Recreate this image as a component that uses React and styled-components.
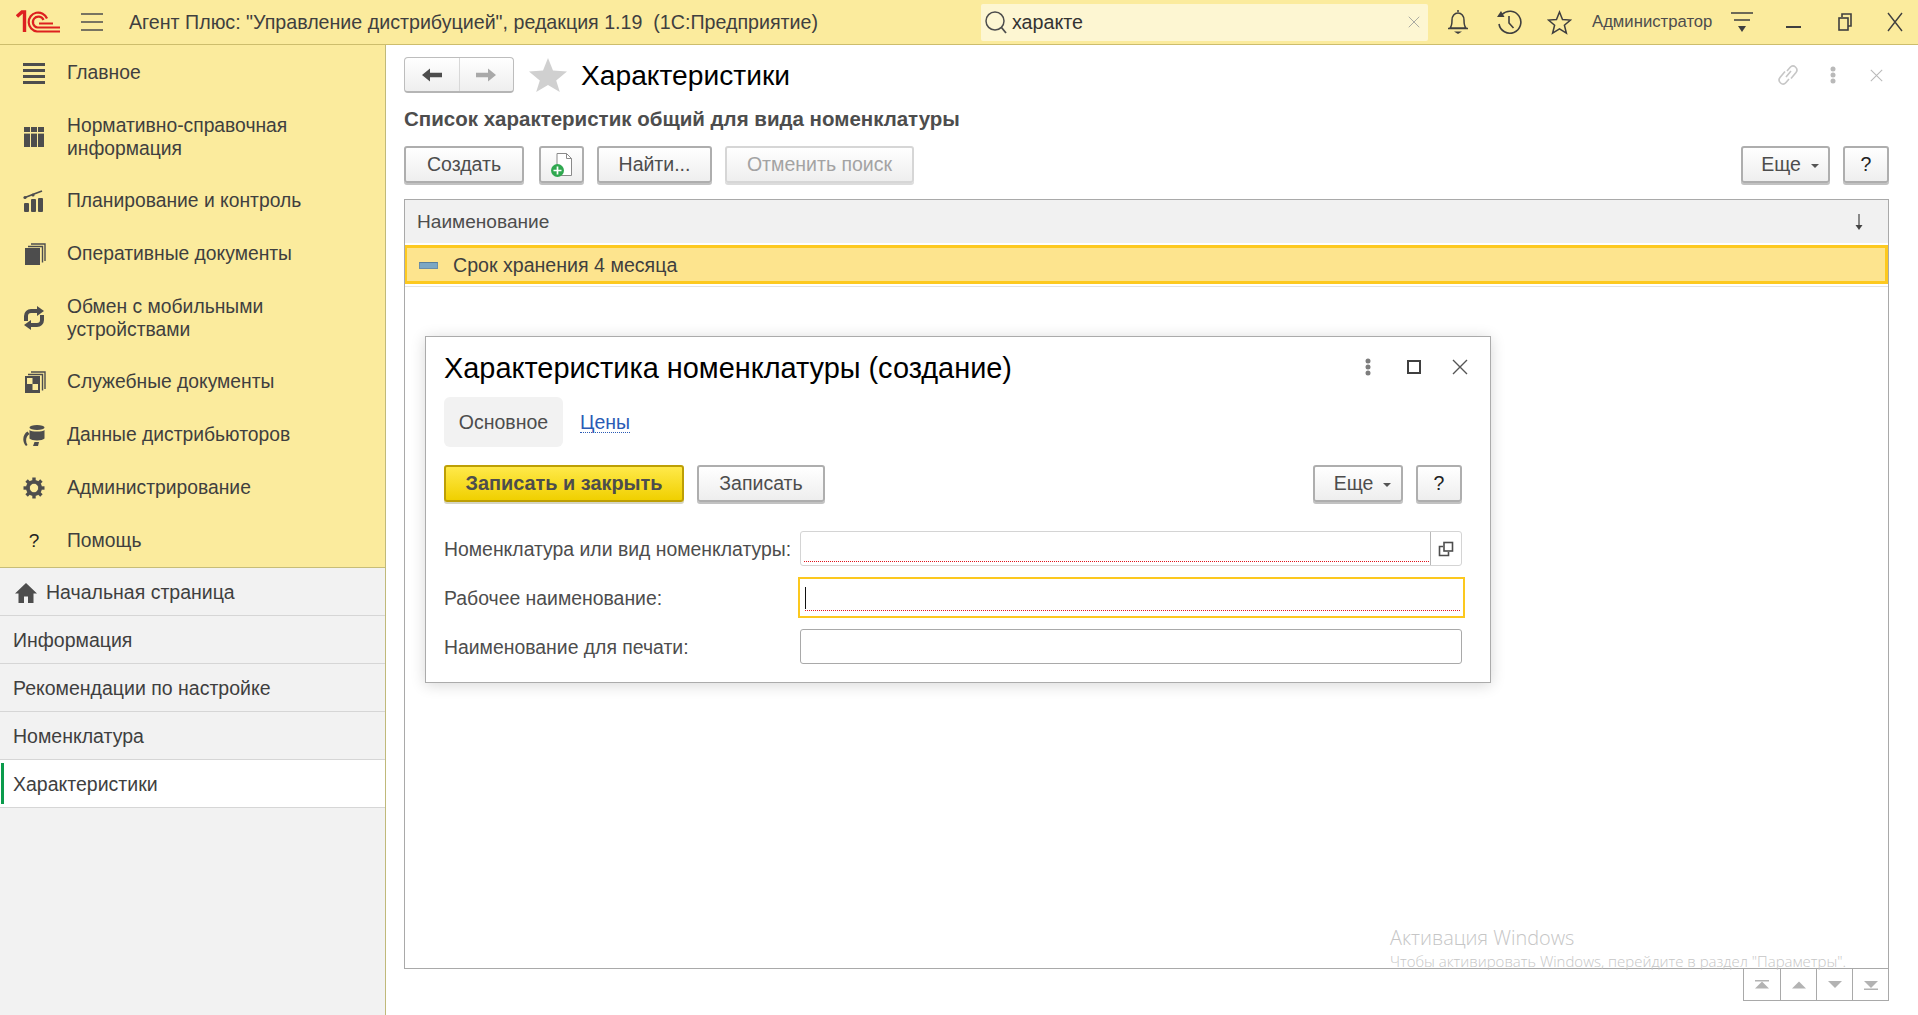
import React from 'react'
import styled, { createGlobalStyle } from 'styled-components'

const GlobalStyle = createGlobalStyle`
html, body {
  margin: 0;
  padding: 0;
  background: #fff;
}
body {
  font-family: "Liberation Sans", Arial, sans-serif;
  color: #4d4d4d;
  overflow: hidden;
}
* { box-sizing: border-box; }
`

const Page = styled.div`
position: relative;
width: 1918px;
height: 1015px;
display: flex;
flex-direction: column;
overflow: hidden;
`

/* top bar */
const TopBar = styled.header`
height: 45px;
flex: none;
display: flex;
align-items: center;
background: #fbeb9d;
border-bottom: 1px solid #cdbd6c;
`
const Logo = styled.svg`
width: 46px;
height: 24px;
margin-left: 16px;
flex: none;
`
const Burger = styled.svg`
width: 24px;
height: 20px;
margin-left: 18px;
flex: none;
`
const AppTitle = styled.div`
margin-left: 25px;
width: 852px;
flex: none;
font-size: 19.65px;
color: #3f3f3f;
white-space: pre;
`
const SearchBox = styled.div`
width: 447px;
height: 37px;
flex: none;
display: flex;
align-items: center;
padding: 0 8px 0 3px;
background: #fdf6d2;
border-radius: 2px;
`
const SearchText = styled.span`
flex: 1;
margin-left: 4px;
font-size: 19.7px;
color: #333;
`
const BarIcon = styled.svg`
flex: none;
margin-left: ${p => p.$ml || 0}px;
`
const UserName = styled.span`
margin-left: 20px;
width: 122px;
flex: none;
font-size: 16.7px;
color: #4d4d4d;
white-space: nowrap;
`

/* sidebar */
const Body = styled.div`
flex: 1;
display: flex;
min-height: 0;
`
const Sidebar = styled.aside`
width: 386px;
flex: none;
display: flex;
flex-direction: column;
background: #f2f2f2;
border-right: 1px solid #c0b97a;
`
const Menu = styled.nav`
height: 523px;
flex: none;
padding-top: 1px;
background: #fbeb9d;
border-bottom: 1px solid #c7bd78;
`
const MenuItem = styled.div`
display: flex;
align-items: center;
height: ${p => (p.$tall ? 75 : 53)}px;
padding-left: 22px;
gap: 21px;
font-size: 19.3px;
line-height: 23px;
color: #3f3f3f;
`
const MenuIcon = styled.svg`
width: 24px;
height: 24px;
flex: none;
`
const Helpmark = styled.span`
width: 24px;
flex: none;
text-align: center;
font-size: 19px;
color: #222;
`
const OpenTab = styled.div`
position: relative;
display: flex;
align-items: center;
gap: 8px;
height: 48px;
padding-top: 2px;
padding-left: ${p => (p.$home ? 14 : 13)}px;
font-size: 19.5px;
color: #3f3f3f;
background: ${p => (p.$active ? '#fff' : 'transparent')};
border-bottom: 1px solid #d6d6d6;
`
const ActiveMark = styled.i`
position: absolute;
left: 1px;
top: 3px;
bottom: 3px;
width: 3px;
background: #0a9b4c;
`

/* content */
const Content = styled.main`
flex: 1;
position: relative;
display: flex;
flex-direction: column;
padding: 12px 29px 0 18px;
min-width: 0;
`
const TitleRow = styled.div`
height: 36px;
flex: none;
display: flex;
align-items: center;
`
const NavGroup = styled.div`
width: 110px;
height: 36px;
flex: none;
display: flex;
background: linear-gradient(#fff, #eee);
border: 1px solid #bdbdbd;
border-bottom: 2px solid #b5b5b5;
border-radius: 4px;
`
const NavButton = styled.div`
flex: 1;
display: flex;
align-items: center;
justify-content: center;
& + & { border-left: 1px solid #d8d8d8; }
`
const PageTitle = styled.h1`
margin: 0 0 0 14px;
font-size: 28.2px;
font-weight: 400;
color: #000;
flex: 1;
white-space: nowrap;
`
const CornerTools = styled.div`
display: flex;
align-items: center;
gap: 30px;
margin-right: 6px;
`
const CornerClose = styled.span`
display: flex;
margin-left: 4px;
`
const Subtitle = styled.div`
margin-top: 14px;
height: 24px;
line-height: 24px;
flex: none;
font-size: 20.5px;
font-weight: 700;
color: #4d4d4d;
white-space: nowrap;
`
const Toolbar = styled.div`
margin-top: ${p => p.$mt || 0}px;
height: 39px;
flex: none;
display: flex;
gap: 13px;
`
const Spacer = styled.div`
flex: 1;
`
const Button = styled.button`
height: 37px;
width: ${p => p.$w}px;
flex: none;
margin-left: ${p => p.$ml || 0}px;
padding: ${p => (p.$more ? '0 0 0 9px' : 0)};
display: flex;
align-items: center;
justify-content: center;
gap: 10px;
font-family: inherit;
font-size: ${p => (p.$primary ? 19.9 : 19.5)}px;
font-weight: ${p => (p.$primary ? 700 : 400)};
color: ${p => (p.$disabled ? '#a3a3a3' : '#4d4d4d')};
background: ${p => (p.$primary ? 'linear-gradient(#ffe94a, #f0d000)' : 'linear-gradient(#fff, #eeeeee)')};
border: 2px solid ${p => (p.$primary ? '#bd9f05' : p.$disabled ? '#d6d6d6' : '#aeaeae')};
border-radius: 3px;
box-shadow: 0 2px 0 ${p => (p.$primary ? '#d5d5c4' : p.$disabled ? '#dcdcdc' : '#c2c2c2')};
`
const Caret = styled.i`
width: 0;
height: 0;
margin-top: 2px;
border-left: 4px solid transparent;
border-right: 4px solid transparent;
border-top: 4px solid #555;
`
const Question = styled.span`
color: #222;
`

const ListFrame = styled.section`
margin-top: 14px;
height: 770px;
flex: none;
display: flex;
flex-direction: column;
border: 1px solid #a9a9a9;
`
const ListHeader = styled.div`
height: 43px;
flex: none;
display: flex;
align-items: center;
justify-content: space-between;
padding: 0 24px 0 12px;
font-size: 19.1px;
color: #4d4d4d;
background: #f1f1f1;
`
const ListRow = styled.div`
margin-top: 2px;
height: 39px;
flex: none;
display: flex;
align-items: center;
gap: 15px;
padding-left: 12px;
padding-top: 1px;
font-size: 19.6px;
color: #3f3f3f;
background: #fde48e;
border: 3px solid #fdc91f;
border-left-width: 2px;
`
const RowMark = styled.i`
width: 19px;
height: 7px;
flex: none;
background: #7ba7c4;
border: 1px solid #6b8ea8;
border-top-color: #5a7f99;
`
const RowRule = styled.div`
height: 1px;
margin-top: 2px;
flex: none;
background: #e4e4e4;
`
const Pager = styled.div`
align-self: flex-end;
height: 32px;
flex: none;
display: flex;
border: 1px solid #a9a9a9;
border-top: none;
`
const PagerCell = styled.div`
width: 36px;
display: flex;
align-items: center;
justify-content: center;
& + & { border-left: 1px solid #a9a9a9; }
`

/* dialog floats over the list */
const Dialog = styled.section`
position: absolute;
left: 39px;
top: 291px;
width: 1066px;
height: 347px;
padding: 0 28px 0 18px;
background: #fff;
border: 1px solid #ababab;
box-shadow: 0 2px 14px rgba(0, 0, 0, 0.16);
`
const DialogHead = styled.div`
height: 60px;
display: flex;
align-items: center;
`
const DialogTitle = styled.h2`
flex: 1;
margin: 0;
padding-top: 3px;
font-size: 28.9px;
font-weight: 400;
color: #000;
white-space: nowrap;
`
const DialogTools = styled.div`
display: flex;
align-items: center;
gap: 31px;
margin-right: -6px;
`
const ToolDots = styled.span`
display: flex;
margin-right: 5px;
`
const Tabs = styled.div`
height: 50px;
display: flex;
align-items: center;
gap: 17px;
`
const TabCurrent = styled.div`
width: 119px;
height: 50px;
display: flex;
align-items: center;
justify-content: center;
font-size: 19.5px;
color: #4d4d4d;
background: #f2f2f2;
border-radius: 6px;
`
const TabLink = styled.a`
font-size: 19.5px;
color: #2a5bb5;
border-bottom: 1px dotted #2a5bb5;
line-height: 20px;
text-decoration: none;
`
const FieldRow = styled.div`
margin-top: ${p => p.$mt || 0}px;
display: flex;
align-items: center;
height: ${p => p.$h || 35}px;
`
const FieldLabel = styled.label`
width: 356px;
flex: none;
padding-top: 2px;
font-size: 19.4px;
color: #4d4d4d;
white-space: nowrap;
`
const Field = styled.div`
position: relative;
flex: 1;
height: 35px;
display: flex;
background: #fff;
border: 1px solid ${p => (p.$soft ? '#d4d4d4' : '#a9a9a9')};
border-radius: 3px;
`
const FocusField = styled.div`
position: relative;
flex: 1;
height: 41px;
margin: 0 -3px 0 -2px;
background: #fff;
border: 2px solid #fcc81e;
`
const Underline = styled.i`
position: absolute;
left: ${p => p.$l}px;
right: ${p => p.$r}px;
bottom: ${p => p.$b}px;
border-bottom: 1px dotted #e0141c;
`
const Caretbar = styled.i`
position: absolute;
left: 5px;
top: 8px;
width: 1px;
height: 22px;
background: #111;
`
const FieldButton = styled.div`
margin-left: auto;
width: 31px;
display: flex;
align-items: center;
justify-content: center;
border-left: 1px solid #b8b8b8;
`

/* system watermark */
const Watermark = styled.div`
position: absolute;
left: 1390px;
top: 926px;
font-family: "Open Sans", sans-serif;
font-weight: 300;
color: #c6c6c6;
pointer-events: none;
`
const WatermarkHead = styled.div`
font-size: 19.9px;
line-height: 24px;
`
const WatermarkText = styled.div`
font-size: 14.97px;
line-height: 22px;
white-space: nowrap;
`

const menuIcons = {
  main: <g fill="#4d4d4d"><rect x="1" y="2" width="22" height="3" /><rect x="1" y="8" width="22" height="3" /><rect x="1" y="14" width="22" height="3" /><rect x="1" y="20" width="22" height="3" /></g>,
  ref: <g fill="#4d4d4d"><path d="M2 2h6v20H2zM9 2h6v20H9zM16 2h6v20h-6z" /><path d="M2 7h20v1.600H2z" fill="#fbeb9d" /></g>,
  plan: <g fill="#4d4d4d"><rect x="2" y="14" width="5" height="9" rx="1" /><rect x="9" y="10" width="5" height="13" rx="1" /><rect x="16" y="9" width="5" height="14" rx="1" /><path d="M3 8.500 12 5l8-3" fill="none" stroke="#4d4d4d" strokeWidth="1.800" /><circle cx="3" cy="8.500" r="1.600" /><circle cx="11" cy="6" r="1.600" /></g>,
  docs: <g><rect x="3" y="6" width="15" height="17" fill="#4d4d4d" /><path d="M6 4.500h14.500v16M9 2h14v17" fill="none" stroke="#4d4d4d" strokeWidth="1.400" /></g>,
  sync: <g><path d="M4 15V10a5 5 0 0 1 5-5h8" fill="none" stroke="#4d4d4d" strokeWidth="4" /><path d="M20 9v5a5 5 0 0 1-5 5H7" fill="none" stroke="#4d4d4d" strokeWidth="4" /><path d="M15 0v10l7-5z" fill="#4d4d4d" /><path d="M9 14v10l-7-5z" fill="#4d4d4d" /></g>,
  service: <g><rect x="3" y="6" width="15" height="17" fill="#4d4d4d" /><path d="M6 4.500h14.500v16M9 2h14v17" fill="none" stroke="#4d4d4d" strokeWidth="1.400" /><rect x="5" y="8" width="5.500" height="6" fill="#fbeb9d" /><rect x="10.500" y="14" width="5.500" height="6" fill="#fbeb9d" /></g>,
  data: <g fill="#4d4d4d"><ellipse cx="15" cy="4.500" rx="7.500" ry="2.600" /><path d="M7.500 7c2 2 13 2 15 0v8.500c-2 2.500-13 2.500-15 0z" /><path d="M5.500 8.500C1 11 -.5 18 4 23l1.500-1c-2.500-4-1.500-8.500 2-11z" /><path d="M11 23h5l1-4-4.500 0z" /></g>,
}

const Gear = () => (
  <MenuIcon viewBox="0 0 24 24">
    <g stroke="#4d4d4d" strokeWidth="3.400">
      {[0, 45, 90, 135].map(a => <path key={a} d="M12 1.500v21" transform={`rotate(${a} 12 12)`} />)}
    </g>
    <circle cx="12" cy="12" r="6.300" fill="none" stroke="#4d4d4d" strokeWidth="3.400" />
    <circle cx="12" cy="12" r="4.200" fill="#fbeb9d" />
  </MenuIcon>
)

const Arrow = ({ flip, color }) => (
  <svg width="22" height="16" viewBox="0 0 22 16" style={flip ? { transform: 'scaleX(-1)' } : undefined}>
    <path d="M1 8 9 1.500v4.300h12v4.400H9v4.300z" fill={color} />
  </svg>
)

const Cross = ({ size = 16, color = '#555', w = 1.400 }) => (
  <svg width={size} height={size} viewBox="0 0 16 16"><path d="M1 1l14 14M15 1 1 15" stroke={color} strokeWidth={w} fill="none" /></svg>
)

const Dots = ({ color }) => (
  <svg width="6" height="18" viewBox="0 0 6 18"><g fill={color}><circle cx="3" cy="3" r="2.500" /><circle cx="3" cy="9" r="2.500" /><circle cx="3" cy="15" r="2.500" /></g></svg>
)

const PagerIcon = ({ kind }) => {
  const up = kind === 'first' || kind === 'up'
  const bar = kind === 'first' || kind === 'last'
  return (
    <svg width="16" height="10" viewBox="0 0 16 10">
      <path d={up ? 'M8 1.500 15 8.500H1z' : 'M1 1h14l-7 7z'} fill="#b3b3b3" />
      {bar && <rect x="1" y={up ? 0 : 8.500} width="14" height="1.500" fill="#b3b3b3" />}
    </svg>
  )
}

const App = () => {
  return (
    <Page>
      <GlobalStyle />
      <TopBar>
        <Logo viewBox="0 0 46 24">
          <g fill="none" stroke="#dd2020" strokeWidth="2.200">
            <path d="M1 6.500 6 2h2.500v20" strokeWidth="3.400" />
            <path d="M44 21.500H21a9.500 9.500 0 1 1 10-13" />
            <path d="M44 17.500H21.500a5.500 5.500 0 1 1 6-7.500" />
            <path d="M37 13.500H23" strokeWidth="2" />
          </g>
        </Logo>
        <Burger viewBox="0 0 24 20">
          <path d="M1 2h22M1 10h22M1 18h22" stroke="#4d4d4d" strokeWidth="1.500" />
        </Burger>
        <AppTitle>Агент Плюс: "Управление дистрибуцией", редакция 1.19  (1С:Предприятие)</AppTitle>
        <SearchBox>
          <svg width="24" height="24" viewBox="0 0 24 24">
            <circle cx="11" cy="11" r="9" fill="none" stroke="#4d4d4d" strokeWidth="1.500" />
            <path d="M17.500 17.500 22 23" stroke="#4d4d4d" strokeWidth="1.800" />
          </svg>
          <SearchText>характе</SearchText>
          <Cross size={12} color="#a9a9a0" w={1.300} />
        </SearchBox>
        <BarIcon $ml={18} width="24" height="26" viewBox="0 0 24 26">
          <path d="M12 1v2M4 19c2-2 2-5 2-8 0-4 2.500-7 6-7s6 3 6 7c0 3 0 6 2 8zM2 19.500h20" fill="none" stroke="#3f3f3f" strokeWidth="1.500" />
          <path d="M8 22.500h8L12 25z" fill="#3f3f3f" />
        </BarIcon>
        <BarIcon $ml={26} width="26" height="26" viewBox="0 0 26 26">
          <path d="M6 5.500A11 11 0 1 1 3 15" fill="none" stroke="#3f3f3f" strokeWidth="1.600" />
          <path d="M1 8h7.500L5 2z" fill="#3f3f3f" />
          <path d="M13 7v7l4.500 5" fill="none" stroke="#3f3f3f" strokeWidth="1.600" />
        </BarIcon>
        <BarIcon $ml={25} width="25" height="25" viewBox="0 0 25 25">
          <path d="M12.500 2l3 7.500 8 .6-6.100 5.200 2 7.900-6.900-4.300-6.900 4.300 2-7.900L1.500 10.100l8-.6z" fill="none" stroke="#3f3f3f" strokeWidth="1.500" />
        </BarIcon>
        <UserName>Администратор</UserName>
        <BarIcon $ml={16} width="24" height="22" viewBox="0 0 24 22">
          <path d="M1 2h22M4 9h16" stroke="#3f3f3f" strokeWidth="1.500" />
          <path d="M8 15h8l-4 6z" fill="#3f3f3f" />
        </BarIcon>
        <BarIcon $ml={31} width="18" height="14" viewBox="0 0 18 14">
          <path d="M1 12h15" stroke="#3f3f3f" strokeWidth="2" />
        </BarIcon>
        <BarIcon $ml={34} width="16" height="20" viewBox="0 0 16 20">
          <path d="M5 5V2h9v12h-3" fill="none" stroke="#3f3f3f" strokeWidth="1.600" />
          <rect x="2" y="6" width="9" height="12" fill="none" stroke="#3f3f3f" strokeWidth="1.600" />
        </BarIcon>
        <BarIcon $ml={34} width="16" height="20" viewBox="0 0 16 20">
          <path d="M1 1l14 18M15 1 1 19" stroke="#3f3f3f" strokeWidth="1.400" />
        </BarIcon>
      </TopBar>

      <Body>
        <Sidebar>
          <Menu>
            <MenuItem><MenuIcon viewBox="0 0 24 24">{menuIcons.main}</MenuIcon>Главное</MenuItem>
            <MenuItem $tall><MenuIcon viewBox="0 0 24 24">{menuIcons.ref}</MenuIcon><span>Нормативно-справочная<br />информация</span></MenuItem>
            <MenuItem><MenuIcon viewBox="0 0 24 24">{menuIcons.plan}</MenuIcon>Планирование и контроль</MenuItem>
            <MenuItem><MenuIcon viewBox="0 0 24 24">{menuIcons.docs}</MenuIcon>Оперативные документы</MenuItem>
            <MenuItem $tall><MenuIcon viewBox="0 0 24 24">{menuIcons.sync}</MenuIcon><span>Обмен с мобильными<br />устройствами</span></MenuItem>
            <MenuItem><MenuIcon viewBox="0 0 24 24">{menuIcons.service}</MenuIcon>Служебные документы</MenuItem>
            <MenuItem><MenuIcon viewBox="0 0 24 24">{menuIcons.data}</MenuIcon>Данные дистрибьюторов</MenuItem>
            <MenuItem><Gear />Администрирование</MenuItem>
            <MenuItem><Helpmark>?</Helpmark>Помощь</MenuItem>
          </Menu>
          <OpenTab $home>
            <svg width="24" height="22" viewBox="0 0 24 22">
              <path d="M12 1 1 11.500h3.500V21h5.500v-6.500h4V21h5.500v-9.500H23z" fill="#4d4d4d" />
            </svg>
            Начальная страница
          </OpenTab>
          <OpenTab>Информация</OpenTab>
          <OpenTab>Рекомендации по настройке</OpenTab>
          <OpenTab>Номенклатура</OpenTab>
          <OpenTab $active><ActiveMark />Характеристики</OpenTab>
        </Sidebar>

        <Content>
          <TitleRow>
            <NavGroup>
              <NavButton><Arrow color="#4d4d4d" /></NavButton>
              <NavButton><Arrow flip color="#a9a9a9" /></NavButton>
            </NavGroup>
            <svg width="38" height="34" viewBox="0 0 38 34" style={{ marginLeft: 15, flex: 'none' }}>
              <path d="M19 0l5 12.500 14 .9-10.800 9 3.600 11.600L19 27l-11.800 7 3.600-11.600L0 13.400l14-.9z" fill="#d0d0d0" />
            </svg>
            <PageTitle>Характеристики</PageTitle>
            <CornerTools>
              <svg width="24" height="24" viewBox="0 0 24 24">
                <path d="M10 14l5-6M9 8.500 4 14.500c-3 4 2.500 9 6 5l3-3.500M15 15.500l5-6c3-4-2.500-9-6-5l-3 3.500" fill="none" stroke="#c6c6c6" strokeWidth="1.600" />
              </svg>
              <Dots color="#b9b9b9" />
              <CornerClose><Cross size={13} color="#b9b9b9" w={1.300} /></CornerClose>
            </CornerTools>
          </TitleRow>
          <Subtitle>Список характеристик общий для вида номенклатуры</Subtitle>
          <Toolbar $mt={15}>
            <Button $w={120}>Создать</Button>
            <Button $w={45} $ml={2}>
              <svg width="24" height="26" viewBox="0 0 24 26">
                <path d="M7 1.500h9.500l5 5v17H7z" fill="#fff" stroke="#8a8a8a" />
                <path d="M16.500 1.500v5h5" fill="none" stroke="#8a8a8a" />
                <circle cx="7.500" cy="18.500" r="6.500" fill="#2fa84f" />
                <path d="M7.500 14.500v8M3.500 18.500h8" stroke="#fff" strokeWidth="1.700" />
              </svg>
            </Button>
            <Button $w={115}>Найти...</Button>
            <Button $w={189} $disabled>Отменить поиск</Button>
            <Spacer />
            <Button $w={89} $more>Еще <Caret /></Button>
            <Button $w={46}><Question>?</Question></Button>
          </Toolbar>
          <ListFrame>
            <ListHeader>
              Наименование
              <svg width="10" height="18" viewBox="0 0 10 18">
                <path d="M5 1v12" stroke="#444" strokeWidth="1.200" />
                <path d="M1.500 12h7L5 17z" fill="#444" />
              </svg>
            </ListHeader>
            <ListRow><RowMark />Срок хранения 4 месяца</ListRow>
            <RowRule />
          </ListFrame>
          <Pager>
            <PagerCell><PagerIcon kind="first" /></PagerCell>
            <PagerCell><PagerIcon kind="up" /></PagerCell>
            <PagerCell><PagerIcon kind="down" /></PagerCell>
            <PagerCell><PagerIcon kind="last" /></PagerCell>
          </Pager>

          <Dialog>
            <DialogHead>
              <DialogTitle>Характеристика номенклатуры (создание)</DialogTitle>
              <DialogTools>
                <ToolDots><Dots color="#7d7d7d" /></ToolDots>
                <svg width="14" height="14" viewBox="0 0 14 14"><rect x="1" y="1" width="12" height="12" fill="none" stroke="#3f3f3f" strokeWidth="2" /></svg>
                <Cross size={16} color="#555" w={1.400} />
              </DialogTools>
            </DialogHead>
            <Tabs>
              <TabCurrent>Основное</TabCurrent>
              <TabLink>Цены</TabLink>
            </Tabs>
            <Toolbar $mt={18}>
              <Button $w={240} $primary>Записать и закрыть</Button>
              <Button $w={128}>Записать</Button>
              <Spacer />
              <Button $w={90} $more>Еще <Caret /></Button>
              <Button $w={46}><Question>?</Question></Button>
            </Toolbar>
            <FieldRow $mt={27}>
              <FieldLabel>Номенклатура или вид номенклатуры:</FieldLabel>
              <Field $soft>
                <Underline $l={3} $r={32} $b={3} />
                <FieldButton>
                  <svg width="16" height="16" viewBox="0 0 16 16">
                    <path d="M5 5.500H1.500V14.500H10.500V11" fill="none" stroke="#4d4d4d" strokeWidth="1.600" />
                    <rect x="6" y="1.500" width="8.500" height="8.500" fill="none" stroke="#4d4d4d" strokeWidth="1.600" />
                  </svg>
                </FieldButton>
              </Field>
            </FieldRow>
            <FieldRow $mt={11} $h={41}>
              <FieldLabel>Рабочее наименование:</FieldLabel>
              <FocusField>
                <Caretbar />
                <Underline $l={5} $r={3} $b={5} />
              </FocusField>
            </FieldRow>
            <FieldRow $mt={11}>
              <FieldLabel>Наименование для печати:</FieldLabel>
              <Field />
            </FieldRow>
          </Dialog>
        </Content>
      </Body>

      <Watermark>
        <WatermarkHead>Активация Windows</WatermarkHead>
        <WatermarkText>Чтобы активировать Windows, перейдите в раздел "Параметры".</WatermarkText>
      </Watermark>
    </Page>
  )
}

export default App
